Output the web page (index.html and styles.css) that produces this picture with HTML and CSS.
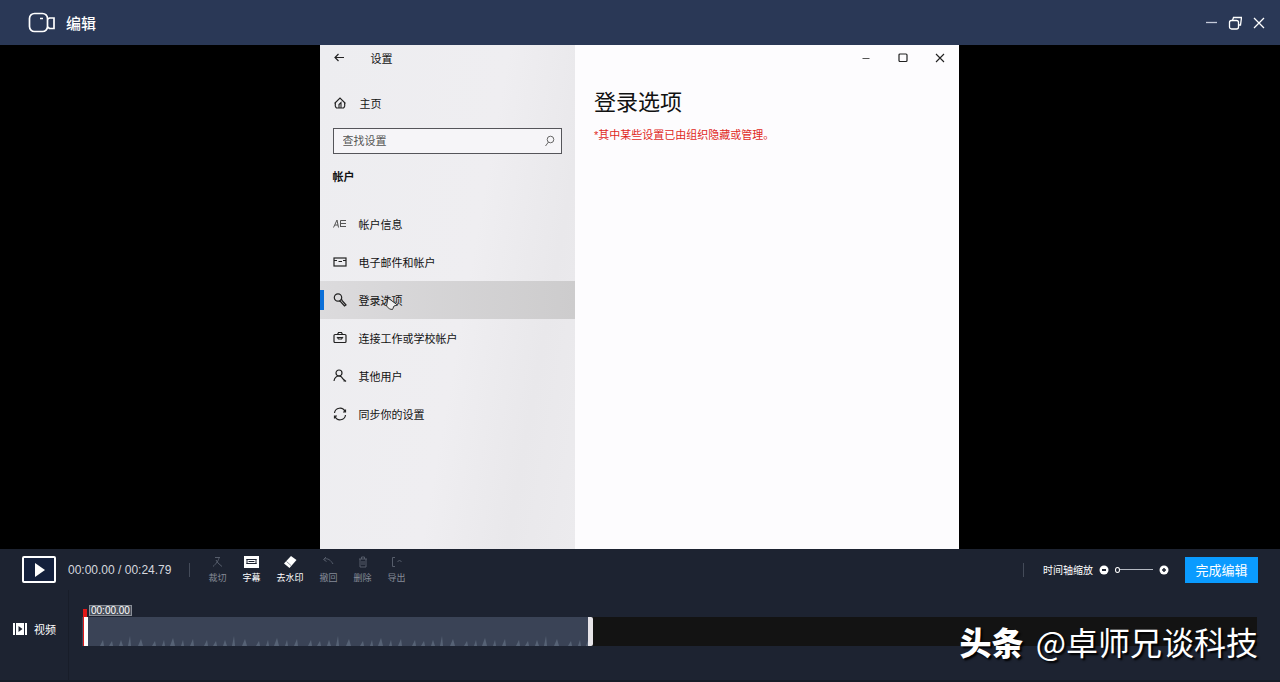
FILE: index.html
```html
<!DOCTYPE html>
<html lang="zh-Hans">
<head>
    <meta charset="UTF-8">
    <meta name="viewport" content="width=device-width, initial-scale=1.0">
    <title>编辑</title>
    <link rel="stylesheet" href="styles.css">
</head>
<body>
    <header class="titlebar">
        <svg class="logo" width="28" height="22" viewBox="0 0 28 22" fill="none" stroke="#fff" stroke-width="1.7">
            <rect x="1.5" y="1.5" width="18" height="18" rx="5"/>
            <path d="M19.5 7L21.500 6H26v10.500h-4.500l-2-1.500M12 6.500h3"/>
        </svg>
        <h1 class="app-name">编辑</h1>
        <div class="window-buttons">
            <button type="button" aria-label="最小化">
                <svg width="14" height="14" viewBox="0 0 14 14" fill="none" stroke="#c5cbd9" stroke-width="1.300"><path d="M2 6.500h11"/></svg>
            </button>
            <button type="button" aria-label="还原">
                <svg width="14" height="14" viewBox="0 0 14 14" fill="none" stroke="#fff" stroke-width="1.300"><rect x="1.500" y="4.500" width="9" height="8.500" rx="2"/><path d="M4.500 4.500l1-3H13.500l-1 7.500h-2"/></svg>
            </button>
            <button type="button" aria-label="关闭">
                <svg width="14" height="14" viewBox="0 0 14 14" fill="none" stroke="#fff" stroke-width="1.300"><path d="M2 2l10 10M12 2L2 12"/></svg>
            </button>
        </div>
    </header>

    <main class="stage">
        <div class="settings">
            <aside class="sidebar">
                <div class="side-title">
                    <button type="button" aria-label="返回">
                        <svg width="12" height="12" viewBox="0 0 12 12" fill="none" stroke="#222" stroke-width="1.200"><path d="M11 5.500H2M5.500 2L2 5.500 5.500 9"/></svg>
                    </button>
                    <span>设置</span>
                </div>
                <a class="home" href="#">
                    <svg width="14" height="14" viewBox="0 0 14 14" fill="none" stroke="#222" stroke-width="1.100"><path d="M1.500 7.500L7 2l5.500 5.500M2.500 7c-.5 2-.5 4 1 5h7c1.500-1 1.500-3 1-5M6 12V8.500l2-2V12"/></svg>
                    <span>主页</span>
                </a>
                <div class="search">
                    <input type="text" placeholder="查找设置" aria-label="查找设置">
                    <svg width="12" height="12" viewBox="0 0 12 12" fill="none" stroke="#666"><circle cx="6.500" cy="4.500" r="3.300"/><path d="M4.500 7l-3 4"/></svg>
                </div>
                <h2 class="group">帐户</h2>
                <nav class="menu">
                    <a href="#">
                        <svg width="14" height="14" viewBox="0 0 14 14" fill="none" stroke="#555"><path d="M.5 10.500L4 3l1.500 7.500M2 8h3M7.500 3.500H13M7 6.500h6M7 9.500h6M7.500 3.500v6"/></svg>
                        <span>帐户信息</span>
                    </a>
                    <a href="#">
                        <svg width="14" height="14" viewBox="0 0 14 14" fill="none" stroke="#222" stroke-width="1.200"><rect x="1" y="3" width="12" height="8"/><path d="M1 5.500h3M5.500 6.500H9M10 5.500h3"/></svg>
                        <span>电子邮件和帐户</span>
                    </a>
                    <a class="active" href="#">
                        <svg width="14" height="14" viewBox="0 0 14 14" fill="none" stroke="#222" stroke-width="1.200"><circle cx="5" cy="4.500" r="3.700"/><path d="M6 8l1.500.5 4 4.500 1.500-1-4-4.500L8.500 6"/></svg>
                        <span>登录选项</span>
                        <svg class="cursor" width="14" height="14" viewBox="0 0 14 14" fill="#eee" stroke="#333"><path d="M3 1L1.500 9l3 3 3 .5L9 9l3.500-1z"/></svg>
                    </a>
                    <a href="#">
                        <svg width="14" height="14" viewBox="0 0 14 14" fill="none" stroke="#222" stroke-width="1.200"><rect x="1" y="3.500" width="12" height="8" rx="1"/><path d="M4.500 3.500L5.500 1.500h3l1 2M4 6l1.500 2h3L10 6M5 6.500h4"/></svg>
                        <span>连接工作或学校帐户</span>
                    </a>
                    <a href="#">
                        <svg width="14" height="14" viewBox="0 0 14 14" fill="none" stroke="#222" stroke-width="1.200"><circle cx="6" cy="4" r="3"/><path d="M1 12c.5-3 2.500-5 5-5 2 0 3.200 1.300 4 3M10 10l3 2.500M10.500 12H13"/></svg>
                        <span>其他用户</span>
                    </a>
                    <a href="#">
                        <svg width="14" height="14" viewBox="0 0 14 14" fill="none" stroke="#222" stroke-width="1.200"><path d="M1.500 6A5.500 5.500 0 0 1 12 4.500M12.500 8A5.500 5.500 0 0 1 2 9.500M12.500 2.500v2.500H10M1.500 11.500V9H4"/></svg>
                        <span>同步你的设置</span>
                    </a>
                </nav>
            </aside>
            <section class="content">
                <div class="inner-buttons">
                    <button type="button" aria-label="最小化">
                        <svg width="12" height="12" viewBox="0 0 12 12" fill="none" stroke="#555"><path d="M2.500 6.500h7"/></svg>
                    </button>
                    <button type="button" aria-label="最大化">
                        <svg width="12" height="12" viewBox="0 0 12 12" fill="none" stroke="#222" stroke-width="1.200"><rect x="2" y="2" width="8" height="7.500" rx="1"/></svg>
                    </button>
                    <button type="button" aria-label="关闭">
                        <svg width="12" height="12" viewBox="0 0 12 12" fill="none" stroke="#222" stroke-width="1.100"><path d="M2 2l8 8M10 2l-8 8"/></svg>
                    </button>
                </div>
                <h2 class="page-title">登录选项</h2>
                <p class="notice">*其中某些设置已由组织隐藏或管理。</p>
            </section>
        </div>
    </main>

    <footer class="editor">
        <div class="controls">
            <button class="play" type="button" aria-label="播放">
                <svg width="14" height="16" viewBox="0 0 14 16" fill="#fff"><path d="M3 1l10 7-10 7z"/></svg>
            </button>
            <span class="time">00:00.00 / 00:24.79</span>
            <div class="tools">
                <button type="button" disabled>
                    <svg width="14" height="14" viewBox="0 0 14 14" fill="none" stroke="currentColor"><path d="M5 2.500h5M9 2.500C9 5 6 9 3 11.500M6 5l2 3 4 3.500"/></svg>
                    <span>裁切</span>
                </button>
                <button type="button">
                    <svg width="16" height="14" viewBox="0 0 16 14"><rect x="1" y="1" width="15" height="12" fill="#fff"/><path d="M3.500 4.500h10M3.500 8.500h10M4 4v5M13 4v5M5.500 6.500h6" stroke="#1d2331" fill="none"/></svg>
                    <span>字幕</span>
                </button>
                <button type="button">
                    <svg width="14" height="14" viewBox="0 0 14 14"><path d="M8 1l5.500 4-7 8L1 8.500z" fill="#fff"/><path d="M3.500 6.500l4.500 4" stroke="#8c919b" fill="none"/></svg>
                    <span>去水印</span>
                </button>
                <button type="button" disabled>
                    <svg width="14" height="14" viewBox="0 0 14 14" fill="none" stroke="currentColor"><path d="M5 2L2.500 4.500l3 2M3 4c4-1 6.500 1 9 5"/></svg>
                    <span>撤回</span>
                </button>
                <button type="button" disabled>
                    <svg width="14" height="14" viewBox="0 0 14 14" fill="none" stroke="currentColor"><path d="M3 4h8M5.500 4V2h3v2M4 4v8h6V4M6 6v4M8 6v4"/></svg>
                    <span>删除</span>
                </button>
                <button type="button" disabled>
                    <svg width="14" height="14" viewBox="0 0 14 14" fill="none" stroke="currentColor"><path d="M5 2.500H2.500v9H5M7.500 7L9.500 5l2 2"/></svg>
                    <span>导出</span>
                </button>
            </div>
            <div class="zoom">
                <label for="zoom">时间轴缩放</label>
                <button type="button" aria-label="缩小">
                    <svg width="10" height="10" viewBox="0 0 10 10"><circle cx="5" cy="5" r="4.500" fill="#fff"/><path d="M3 5h4" stroke="#1d2331" stroke-width="2"/></svg>
                </button>
                <input type="range" id="zoom" min="0" max="100" value="0">
                <button type="button" aria-label="放大">
                    <svg width="10" height="10" viewBox="0 0 10 10"><circle cx="5" cy="5" r="4.500" fill="#fff"/><path d="M3 5h4M5 3v4" stroke="#1d2331" stroke-width="1.500"/></svg>
                </button>
            </div>
            <button class="done" type="button">完成编辑</button>
        </div>
        <div class="timeline">
            <div class="track-name">
                <svg width="16" height="12" viewBox="0 0 16 12"><rect x="1" y="0" width="14" height="12" fill="#fff"/><path d="M3.500 0v12M12.500 0v12" stroke="#1d2331"/><path d="M6.500 3L10.500 6l-4 3z" fill="#1d2331"/></svg>
                <span>视频</span>
            </div>
            <div class="track-area">
                <div class="track">
                    <div class="clip">
                        <svg class="wave" width="100%" height="12">
                            <defs>
                                <pattern id="wave" width="104" height="12" patternUnits="userSpaceOnUse">
                                    <path d="M0 12l3-6 1 6zM9 12l3-5 1 5zM19 12l2-6 2 6zM28 12l2-10 1 10zM38 12l3-7 2 7zM52 12l3-5 1 5zM62 12l2-6 1 6zM70 12l3-8 2 8zM81 12l2-6 1 6zM90 12l3-7 1 7z" fill="#566275"/>
                                </pattern>
                            </defs>
                            <rect width="100%" height="12" fill="url(#wave)"/>
                        </svg>
                    </div>
                    <div class="playhead"></div>
                    <span class="playhead-time">00:00.00</span>
                </div>
            </div>
        </div>
        <div class="watermark"><strong>头条</strong> @卓师兄谈科技</div>
    </footer>
</body>
</html>
```
FILE: styles.css
```css
* {
    box-sizing: border-box;
}
body {
    margin: 0;
    min-height: 100vh;
    display: flex;
    flex-direction: column;
    background: #000;
    color: #fff;
    font-family: "Liberation Sans", "Noto Sans CJK SC", sans-serif;
    font-size: 11px;
}
h1, h2, p {
    margin: 0;
}
button {
    display: flex;
    align-items: center;
    justify-content: center;
    padding: 0;
    border: none;
    background: none;
    color: inherit;
    font: inherit;
    cursor: pointer;
}
a {
    color: inherit;
    text-decoration: none;
}
svg {
    flex: none;
}

/* 标题栏 */
.titlebar {
    display: flex;
    align-items: center;
    height: 45px;
    padding: 0 14px 0 28px;
    background: #2a3856;
}
.app-name {
    margin-left: 10px;
    font-size: 15px;
    font-weight: 500;
}
.window-buttons {
    display: flex;
    gap: 10px;
    margin-left: auto;
}

/* 预览区 */
.stage {
    flex: 1;
    display: flex;
    justify-content: center;
    padding-right: 2px;
}
.settings {
    display: flex;
    width: 50%;
    color: #111;
}
.sidebar {
    width: 40%;
    background: linear-gradient(100deg, #ededf0 0%, #efeef1 55%, #e9e8eb 80%, #ecebee 100%);
}
.side-title {
    display: flex;
    align-items: center;
    gap: 26px;
    height: 26px;
    padding-left: 13px;
}
.home {
    display: flex;
    align-items: center;
    gap: 13px;
    height: 38px;
    margin-top: 13px;
    padding-left: 13px;
}
.search {
    display: flex;
    align-items: center;
    height: 26px;
    margin: 6px 13px 0;
    padding: 0 5px 0 9px;
    border: 1px solid #55555a;
    background: #f6f5f8;
}
.search input {
    flex: 1;
    min-width: 0;
    padding: 0;
    border: none;
    outline: none;
    background: none;
    font: inherit;
}
.search input::placeholder {
    color: #555;
}
.group {
    margin: 15px 13px 20px;
    font-size: 11px;
    line-height: 16px;
}
.menu a {
    position: relative;
    display: flex;
    align-items: center;
    gap: 12px;
    height: 38px;
    padding-left: 13px;
}
.menu .active {
    background: linear-gradient(90deg, #dcdbdd, #cdcccd);
}
.menu .active::before {
    content: "";
    position: absolute;
    left: 0;
    width: 4px;
    height: 20px;
    background: #0b6fd8;
}
.cursor {
    position: absolute;
    left: 65px;
    top: 16px;
}
.content {
    flex: 1;
    background: #fdfcfe;
}
.inner-buttons {
    display: flex;
    justify-content: flex-end;
    gap: 25px;
    height: 26px;
    padding-right: 13px;
}
.page-title {
    margin: 16px 19px 0;
    font-size: 22px;
    font-weight: 400;
    line-height: 32px;
}
.notice {
    margin: 8px 19px 0;
    color: #e0281c;
    line-height: 16px;
}

/* 编辑区 */
.editor {
    position: relative;
    background: #1d2331;
}
.controls {
    display: flex;
    align-items: center;
    height: 41px;
    padding: 0 22px;
}
.play {
    width: 34px;
    height: 27px;
    border: 2px solid #fff;
    border-radius: 2px;
    background: #14203c;
}
.time {
    margin-left: 12px;
    color: #d5d8df;
    font-size: 12px;
}
.tools {
    display: flex;
    gap: 16px;
    margin-left: 18px;
    padding-left: 19px;
}
.tools,
.zoom {
    background: linear-gradient(#444b59, #444b59) left center / 1px 14px no-repeat;
}
.tools button {
    flex-direction: column;
    gap: 2px;
    font-size: 9px;
    line-height: 14px;
}
.tools button svg {
    margin: 0 1px;
}
.tools button:disabled {
    color: #858b97;
    cursor: default;
}
.tools button:disabled svg {
    color: #565d6b;
}
.zoom {
    display: flex;
    align-items: center;
    gap: 6px;
    margin-left: auto;
    padding-left: 20px;
    font-size: 10px;
}
.zoom input {
    width: 38px;
    height: 10px;
    margin: 0;
    appearance: none;
    background: linear-gradient(#b5b9c2, #b5b9c2) center / 100% 1px no-repeat;
}
.zoom input::-webkit-slider-thumb {
    appearance: none;
    width: 5px;
    height: 6px;
    border: 1px solid #fff;
    border-radius: 50%;
    background: #1d2331;
}
.done {
    width: 73px;
    height: 26px;
    margin-left: 16px;
    background: #0a9bff;
    font-size: 13px;
}
.timeline {
    display: flex;
    height: 92px;
    border-bottom: 2px solid #171c28;
}
.track-name {
    display: flex;
    align-items: center;
    gap: 6px;
    width: 69px;
    padding: 0 0 12px 12px;
    border-right: 1px solid #181d29;
}
.track-area {
    flex: 1;
    padding: 27px 23px 0 13px;
}
.track {
    position: relative;
    height: 29px;
    background: #131313;
}
.clip {
    display: flex;
    align-items: flex-end;
    width: 43.5%;
    height: 100%;
    padding-left: 18px;
    border-right: 5px solid #e6e4e8;
    border-radius: 0 2px 2px 0;
    background: #3a4356;
}
.wave {
    flex: 1;
}
.playhead {
    position: absolute;
    left: 1px;
    top: 0;
    width: 5px;
    height: 29px;
    border-left: 1px solid #e01818;
    background: #fff;
}
.playhead::before {
    content: "";
    position: absolute;
    left: -1px;
    top: -8px;
    width: 4px;
    height: 8px;
    background: #e01818;
}
.playhead-time {
    position: absolute;
    left: 7px;
    top: -12px;
    padding: 0 1px;
    border: 1px solid #8a8f98;
    background: #4a505c;
    font-size: 10px;
    line-height: 9px;
}
.watermark {
    position: absolute;
    right: 22px;
    bottom: 17px;
    font-family: "Noto Sans CJK SC", sans-serif;
    font-size: 32px;
    line-height: 48px;
    text-shadow: 2px 2px 2px #000;
    white-space: nowrap;
}
.watermark strong {
    margin-right: 5px;
    font-weight: 900;
}
```
